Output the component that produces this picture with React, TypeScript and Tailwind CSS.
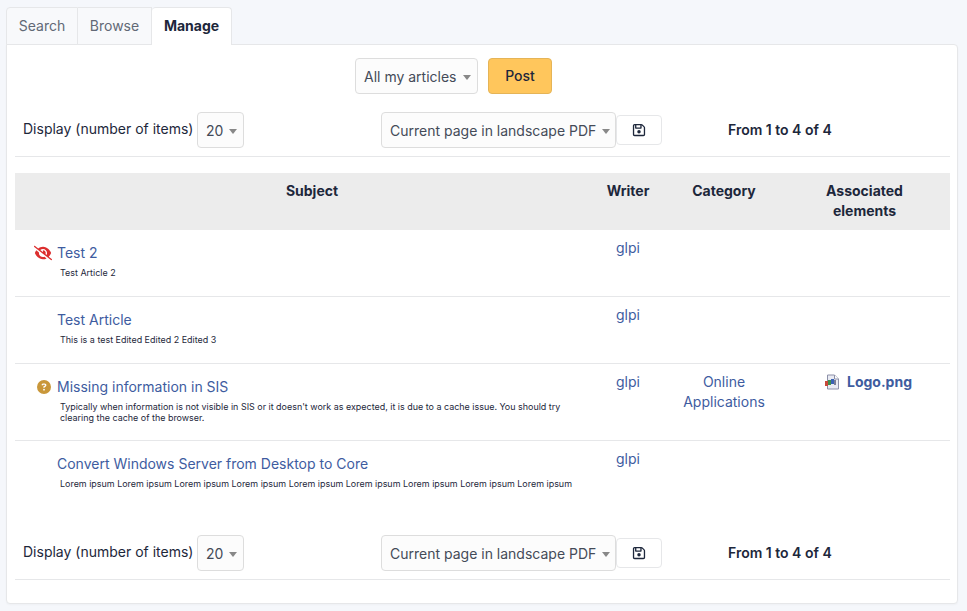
import { FaCircleQuestion, FaEyeSlash, FaRegFloppyDisk } from "react-icons/fa6";

const Caret = () => (
  <span className="ml-[6px] inline-block w-0 h-0 mt-[2px] border-x-4 border-x-transparent border-t-[5px] border-t-[#888888]" />
);

const Select = ({ label, className }: { label: string; className: string }) => (
  <div
    className={`flex items-center justify-between whitespace-nowrap px-[8px] rounded-[4px] border border-[#dddddd] bg-[#fcfcfc] text-[#444b58] ${className}`}
  >
    <span className="pt-[1px]">{label}</span>
    <Caret />
  </div>
);

const PagerBar = () => (
  <div className="flex items-center h-[46px] border-b border-[#e6e7e9] box-content pb-[3px]">
    <span className="ml-2 w-[174px] shrink-0 -mt-[2px] whitespace-nowrap">Display (number of items)</span>
    <Select label="20" className="w-[47px] h-[36px] shrink-0" />
    <div className="ml-[137px] shrink-0">
      <Select label="Current page in landscape PDF" className="w-[235px] h-[36px]" />
    </div>
    <button className="shrink-0 w-[46px] h-[30px] flex items-center justify-center rounded-[4px] border border-[#e6e7e9] bg-white">
      <FaRegFloppyDisk className="text-[14px] text-[#1d273b]" />
    </button>
    <span className="ml-[66px] font-semibold whitespace-nowrap">From 1 to 4 of 4</span>
  </div>
);

const Row = ({
  icon,
  title,
  body,
  category,
  file,
  rowClass,
}: {
  icon?: React.ReactNode;
  title: string;
  body: string;
  category?: boolean;
  file?: boolean;
  rowClass: string;
}) => (
  <div className={`grid grid-cols-[590px_46px_146px_153px] ${rowClass}`}>
    <div className="pt-[13px] pl-[19px]">
      <div className="flex items-center h-[20px]">
        <span className="w-[23px] shrink-0 flex items-center">{icon}</span>
        <a className="text-[#3e5c9f]">{title}</a>
      </div>
      <p className="mt-[4px] ml-[26px] w-[530px] text-[8.95px] leading-[11px] text-[#1d273b]">{body}</p>
    </div>
    <div className="pt-[8px] text-center text-[#3e5c9f]">glpi</div>
    <div className="pt-[8px] px-5 text-center text-[#3e5c9f]">
      {category && "Online Applications"}
    </div>
    <div className="pt-[8px] pl-[27px]">
      {file && (
        <div className="flex items-center gap-[7px]">
          <svg width="16" height="16" viewBox="0 0 16 16">
            <path d="M3.5 1H10.5L14.5 5V15H3.5Z" fill="#e9ebf3" stroke="#8d90a8" />
            <path d="M10.5 1V5H14.5" fill="#ffffff" stroke="#8d90a8" />
            <rect x="1" y="7" width="3" height="5" fill="#c8493a" />
            <rect x="4" y="6" width="3" height="5" fill="#3f8f4f" />
            <rect x="7" y="5" width="3" height="5" fill="#3a62b5" />
            <rect x="10" y="6" width="2" height="5" fill="#7a7f96" />
          </svg>
          <a className="font-bold text-[#3e5c9f]">Logo.png</a>
        </div>
      )}
    </div>
  </div>
);

export default function App() {
  return (
    <div className="min-h-[611px] bg-[#f5f7fb] px-[6px] pt-[7px] font-['Inter',sans-serif] text-[14px] leading-[20px] text-[#1d273b]">
      <div className="flex h-[38px] relative z-10">
        <div className="w-[72px] flex items-center justify-center rounded-tl-[4px] border border-[#e6e7e9] bg-[#f8f9fb] text-[#626976]">
          Search
        </div>
        <div className="w-[74px] flex items-center justify-center border-y border-r border-[#e6e7e9] bg-[#f8f9fb] text-[#626976]">
          Browse
        </div>
        <div className="w-[80px] flex items-center justify-center rounded-t-[4px] border-t border-r border-[#e6e7e9] bg-white font-bold pb-[1px] h-[38px]">
          Manage
        </div>
      </div>
      <div className="w-[952px] h-[560px] -mt-px border border-[#e6e7e9] rounded-b-[4px] rounded-tr-[4px] bg-white pl-2 pr-[7px] shadow-[0_1px_2px_rgba(0,0,0,0.03)]">
        <div className="flex items-center gap-[10px] pt-[13px] pl-[340px]">
          <Select label="All my articles" className="w-[123px] h-[36px]" />
          <button className="w-[64px] h-[36px] rounded-[4px] border border-[#e5b457] bg-[#ffc65c] font-medium">
            Post
          </button>
        </div>
        <div className="mt-[13px]">
          <PagerBar />
        </div>
        <div className="mt-[16px] grid grid-cols-[590px_46px_146px_153px] h-[57px] bg-[#ececec] font-bold text-center">
          <div className="pt-[8px] pl-1">Subject</div>
          <div className="pt-[8px] whitespace-nowrap flex justify-center">Writer</div>
          <div className="pt-[8px]">Category</div>
          <div className="pt-[8px] pr-[18px]">Associated elements</div>
        </div>
        <Row
          rowClass="h-[67px] border-b border-[#e6e7e9]"
          icon={<FaEyeSlash className="text-[18px] text-[#dc2f2f]" />}
          title="Test 2"
          body="Test Article 2"
        />
        <Row
          rowClass="h-[67px] border-b border-[#e6e7e9]"
          title="Test Article"
          body="This is a test Edited Edited 2 Edited 3"
        />
        <Row
          rowClass="h-[77px] border-b border-[#e6e7e9]"
          icon={<FaCircleQuestion className="ml-[3px] text-[14px] text-[#c9973a]" />}
          title="Missing information in SIS"
          body="Typically when information is not visible in SIS or it doesn't work as expected, it is due to a cache issue. You should try clearing the cache of the browser."
          category
          file
        />
        <Row
          rowClass="h-[78px]"
          title="Convert Windows Server from Desktop to Core"
          body="Lorem ipsum Lorem ipsum Lorem ipsum Lorem ipsum Lorem ipsum Lorem ipsum Lorem ipsum Lorem ipsum Lorem ipsum"
        />
        <div className="mt-[11px]">
          <PagerBar />
        </div>
      </div>
    </div>
  );
}
